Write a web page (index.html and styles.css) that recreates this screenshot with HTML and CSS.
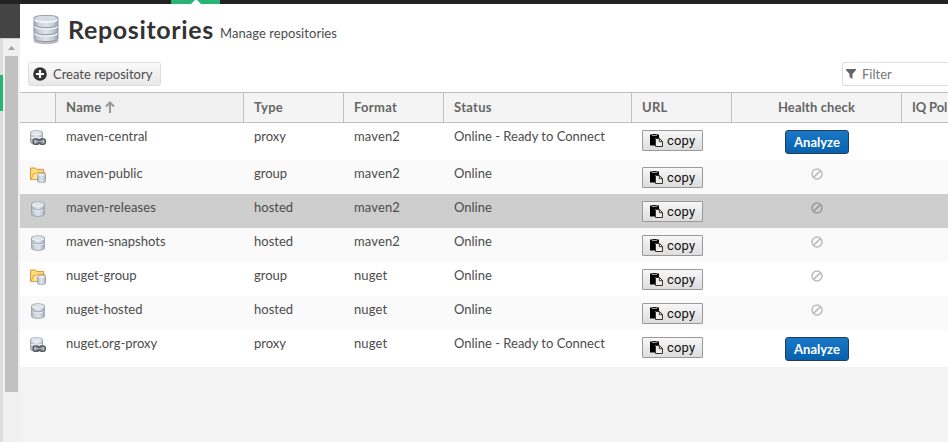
FILE: index.html
```
<!DOCTYPE html>
<html lang="en">
<head>
<meta charset="utf-8">
<title>Repositories</title>
<link rel="stylesheet" href="styles.css">
</head>
<body>
<svg class="defs" width="0" height="0" aria-hidden="true">
  <defs>
    <linearGradient id="metal" x1="0" x2="1" y1="0" y2="0">
      <stop offset="0" stop-color="#a3adb9"/><stop offset=".2" stop-color="#c8d0d9"/><stop offset=".5" stop-color="#dfe4ec"/><stop offset=".8" stop-color="#c5cdd7"/><stop offset="1" stop-color="#98a4b0"/>
    </linearGradient>
    <symbol id="db" viewBox="0 0 16 16">
      <path d="M1.500 3C1.500 0 14.500 0 14.500 3V13C14.500 16.200 1.500 16.200 1.500 13Z" fill="url(#metal)" stroke="#94a0ac" stroke-width=".8"/>
      <ellipse cx="8" cy="3" rx="5.900" ry="1.800" fill="#dce4ea"/>
      <path d="M2 4.200Q8 7 14 4.200M2 8.600Q8 11 14 8.600" fill="none" stroke="#f5f8fb" stroke-width="1"/>
      <path d="M1.700 7.700Q8 10.200 14.300 7.700" fill="none" stroke="#8d99a6" stroke-width=".8"/>
    </symbol>
    <symbol id="proxy" viewBox="0 0 16 16">
      <path d="M.5 2.500C.5 0 12.500 0 12.500 2.500V12C12.500 15 .5 15 .5 12Z" fill="url(#metal)" stroke="#94a0ac" stroke-width=".8"/>
      <ellipse cx="6.500" cy="2.600" rx="5.300" ry="1.400" fill="#dfe9ef"/>
      <path d="M1 4Q6.500 6 12 4M1 7.500Q6.500 9.500 12 7.500" fill="none" stroke="#f5f8fb"/>
      <rect x="3.200" y="9" width="5.600" height="5.200" rx="2" fill="#b9c0c6" stroke="#50565b" stroke-width="1.500"/>
      <rect x="9.700" y="9" width="5.600" height="5.200" rx="2" fill="#b9c0c6" stroke="#50565b" stroke-width="1.500"/>
      <path d="M6 11.600H12.500" stroke="#50565b" stroke-width="2.200"/>
      <path d="M6 11.600H12.500" stroke="#d8dcdf" stroke-width=".8"/>
    </symbol>
    <symbol id="group" viewBox="0 0 16 16">
      <path d="M.6 12.400V1H5.400L6.600 2.400H13.500V12.400Z" fill="#ffdc7b" stroke="#d89431"/>
      <path d="M1.200 12.400L3.500 6.600H6L7.200 5.400H15V12.400Z" fill="#ffe79b" stroke="#dc9b38" stroke-width=".9"/>
      <path d="M7.500 8C7.500 5.700 15.500 5.700 15.500 8V14C15.500 16.300 7.500 16.300 7.500 14Z" fill="url(#metal)" stroke="#929eab" stroke-width=".7"/>
      <ellipse cx="11.500" cy="7.900" rx="3.300" ry="1.100" fill="#e6edf2"/>
    </symbol>
    <symbol id="paste" viewBox="0 0 13 13">
      <path d="M0 .5H2.500V0H6.500V.5H9V4H5V11.500H0Z" fill="#000"/>
      <path d="M2 1.400H7" stroke="#ddd" stroke-width=".8"/>
      <path d="M5.500 4.500H9.500L12.500 7.500V12.500H5.500ZM9.300 4.500V7.700H12.500" fill="#eee" stroke="#333"/>
    </symbol>
    <symbol id="ban" viewBox="0 0 12 12">
      <circle cx="6" cy="6" r="5" fill="none" stroke="currentColor" stroke-width="1.500"/>
      <path d="M2.600 9.400L9.400 2.600" stroke="currentColor" stroke-width="1.500"/>
    </symbol>
  </defs>
</svg>
<div class="topbar"><div class="tab"><svg width="10" height="4" viewBox="0 0 10 4"><path d="M0 4L4 0H6L10 4Z" fill="#fff"/></svg></div></div>
<div class="app">
  <aside class="side">
    <div class="side-head"></div>
    <div class="side-body">
      <div class="menu"><div class="active"></div></div>
      <div class="scrollbar">
        <svg class="up" width="7" height="4" viewBox="0 0 7 4"><path d="M0 4L3.500 0L7 4Z" fill="#a3a3a3"/></svg>
        <div class="thumb"></div>
      </div>
    </div>
  </aside>
  <main class="main">
    <header class="title">
      <svg class="title-icon" width="30" height="32" viewBox="0 0 30 32">
        <ellipse cx="15" cy="28" rx="12.500" ry="3.200" fill="#bbb"/>
        <path d="M3 5C3 1.500 27 1.500 27 5V25.500C27 29.500 3 29.500 3 25.500Z" fill="url(#metal)" stroke="#8b97a4"/>
        <ellipse cx="15" cy="5.200" rx="11" ry="2.500" fill="#d4dce3"/>
        <path d="M3.500 6.500Q5 9 15 9T26.500 6.500M3.500 13.500Q6 16 15 16T26.500 13.500M3.500 20.500Q6 23 15 23T26.500 20.500" fill="none" stroke="#f5f8fc" stroke-width="1.500"/>
        <path d="M3.500 12Q6 14.700 15 14.700T26.500 12M3.500 19Q6 21.700 15 21.700T26.500 19" fill="none" stroke="#8e9aa7" stroke-width="1"/>
      </svg>
      <h1>Repositories</h1><span class="sub">Manage repositories</span>
    </header>
    <div class="toolbar">
      <button class="create"><svg width="14" height="14" viewBox="0 0 14 14"><circle cx="7" cy="7" r="6.800" fill="#333"/><path d="M7 3V11M3 7H11" stroke="#fff" stroke-width="2.200"/></svg><span>Create repository</span></button>
      <div class="filter"><svg width="10" height="10" viewBox="0 0 10 10"><path d="M0 0H10V1L6.500 5V10L3.500 8V5L0 1Z" fill="#666"/></svg><span>Filter</span></div>
    </div>
    <div class="row head">
      <div></div><div class="sorted">Name<svg width="10" height="12" viewBox="0 0 10 12"><path d="M5 12V2M1 5.500L5 1.500L9 5.500" fill="none" stroke="#999" stroke-width="2"/></svg></div><div>Type</div><div>Format</div><div>Status</div><div>URL</div><div class="center health">Health check</div><div class="iq">IQ Pol</div>
    </div>
    <div class="row tall"><div class="ico"><svg><use href="#proxy"/></svg></div><div>maven-central</div><div>proxy</div><div class="format">maven2</div><div>Online - Ready to Connect</div><div><button class="copy"><svg><use href="#paste"/></svg>copy</button></div><div class="center"><button class="analyze">Analyze</button></div><div></div></div>
    <div class="row alt"><div class="ico"><svg><use href="#group"/></svg></div><div>maven-public</div><div>group</div><div class="format">maven2</div><div>Online</div><div><button class="copy"><svg><use href="#paste"/></svg>copy</button></div><div class="center"><svg class="ban"><use href="#ban"/></svg></div><div></div></div>
    <div class="row selected"><div class="ico"><svg><use href="#db"/></svg></div><div class="format">maven-releases</div><div>hosted</div><div class="format">maven2</div><div>Online</div><div><button class="copy"><svg><use href="#paste"/></svg>copy</button></div><div class="center"><svg class="ban"><use href="#ban"/></svg></div><div></div></div>
    <div class="row alt"><div class="ico"><svg><use href="#db"/></svg></div><div>maven-snapshots</div><div>hosted</div><div class="format">maven2</div><div>Online</div><div><button class="copy"><svg><use href="#paste"/></svg>copy</button></div><div class="center"><svg class="ban"><use href="#ban"/></svg></div><div></div></div>
    <div class="row"><div class="ico"><svg><use href="#group"/></svg></div><div>nuget-group</div><div>group</div><div class="format">nuget</div><div>Online</div><div><button class="copy"><svg><use href="#paste"/></svg>copy</button></div><div class="center"><svg class="ban"><use href="#ban"/></svg></div><div></div></div>
    <div class="row alt"><div class="ico"><svg><use href="#db"/></svg></div><div>nuget-hosted</div><div>hosted</div><div class="format">nuget</div><div>Online</div><div><button class="copy"><svg><use href="#paste"/></svg>copy</button></div><div class="center"><svg class="ban"><use href="#ban"/></svg></div><div></div></div>
    <div class="row tall"><div class="ico"><svg><use href="#proxy"/></svg></div><div>nuget.org-proxy</div><div>proxy</div><div class="format">nuget</div><div>Online - Ready to Connect</div><div><button class="copy"><svg><use href="#paste"/></svg>copy</button></div><div class="center"><button class="analyze">Analyze</button></div><div></div></div>
  </main>
</div>
</body>
</html>
```
FILE: styles.css
```
* { box-sizing: border-box; }
body {
  margin: 0;
  height: 442px;
  overflow: hidden;
  display: flex;
  flex-direction: column;
  font: 13px/18px Lato, "Open Sans", sans-serif;
  color: #4c4c4c;
  background: #f3f3f3;
}
button { font: inherit; letter-spacing: inherit; color: inherit; margin: 0; }
svg { display: block; flex: none; }
.defs { position: absolute; }
.topbar { height: 4px; flex: none; background: #222; padding-left: 171px; }
.tab { width: 49px; height: 4px; background: #29b473; display: flex; justify-content: center; }
.app { flex: 1; display: flex; min-height: 0; }
.side { width: 20px; flex: none; display: flex; flex-direction: column; }
.side-head { height: 34px; background: #444; flex: none; }
.side-body { flex: 1; display: flex; border-top: 1px solid #ccc; }
.menu { width: 3px; background: #ddd; padding-top: 36px; }
.active { height: 36px; background: #29b473; }
.scrollbar { width: 17px; background: #f0f0f0; padding: 7px 2px 0; }
.up { margin: 0 auto 6px 3px; }
.thumb { width: 13px; height: 336px; background: #c1c1c1; }
.main { flex: 1; min-width: 0; overflow: hidden; }
.title { height: 53px; padding-left: 11px; background: #fff; display: flex; }
.title-icon { margin-top: 9px; }
h1 { margin: 7px 0 0 7px; width: 152px; font: bold 25px/36px Lato, sans-serif; letter-spacing: .65px; color: #333; white-space: nowrap; }
.sub { margin-top: 20px; letter-spacing: .05px; white-space: nowrap; }
.toolbar { height: 35px; padding: 5px 0 6px 8px; background: #fff; display: flex; justify-content: space-between; }
.create { width: 133px; height: 24px; padding: 0 0 0 4px; border: 1px solid #ddd; border-radius: 3px; background: linear-gradient(#fafafa, #e8e8e8); display: flex; align-items: center; gap: 6px; white-space: nowrap; }
.filter { width: 106px; height: 24px; border: 1px solid #ddd; border-right: 0; border-radius: 3px 0 0 3px; display: flex; align-items: center; padding-left: 3px; gap: 6px; color: #777; }
.row { display: grid; grid-template-columns: 36px 188px 100px 100px 188px 100px 170px 46px; height: 34px; background: #fff; white-space: nowrap; }
.row > div { padding: 4px 0 0 10px; }
.row.tall { height: 37px; }
.row.alt { background: #fafafa; }
.row.selected { background: #cecece; }
.row.head { height: 31px; border: solid #c0c0c0; border-width: 1px 0; background: #f4f4f4; font-weight: bold; letter-spacing: .3px; color: #666; }
.row.head > div { padding-top: 5px; border-right: 1px solid #c0c0c0; }
.row.head > .sorted { background: #f0f0f0; display: flex; gap: 4px; }
.row.head > .health { letter-spacing: .12px; }
.row.head > .iq { letter-spacing: -.15px; border-right: 0; }
.sorted svg { margin-top: 3px; }
.format { letter-spacing: .12px; }
.row > .ico { padding: 7px 0 0 10px; }
.ico svg { width: 16px; height: 16px; }
.copy { width: 61px; height: 21px; margin-top: 3px; padding: 0 0 0 7px; border: 1px solid #999; border-radius: 1px; background: linear-gradient(#f7f7f7, #ddd); font: 13px/18px Roboto, sans-serif; letter-spacing: .2px; color: #111; display: flex; align-items: center; gap: 4px; }
.copy svg { width: 13px; height: 13px; }
.row > .center { padding-left: 0; display: flex; justify-content: center; }
.analyze { width: 64px; height: 24px; margin-top: 3px; padding: 0 0 1px; border: 1px solid #263c55; border-radius: 3px; background: linear-gradient(#1a78c8, #0661ae); color: #fff; font-weight: bold; }
.ban { width: 12px; height: 12px; margin-top: 4px; color: #bbb; }
.selected .ban { color: #999; }
```
